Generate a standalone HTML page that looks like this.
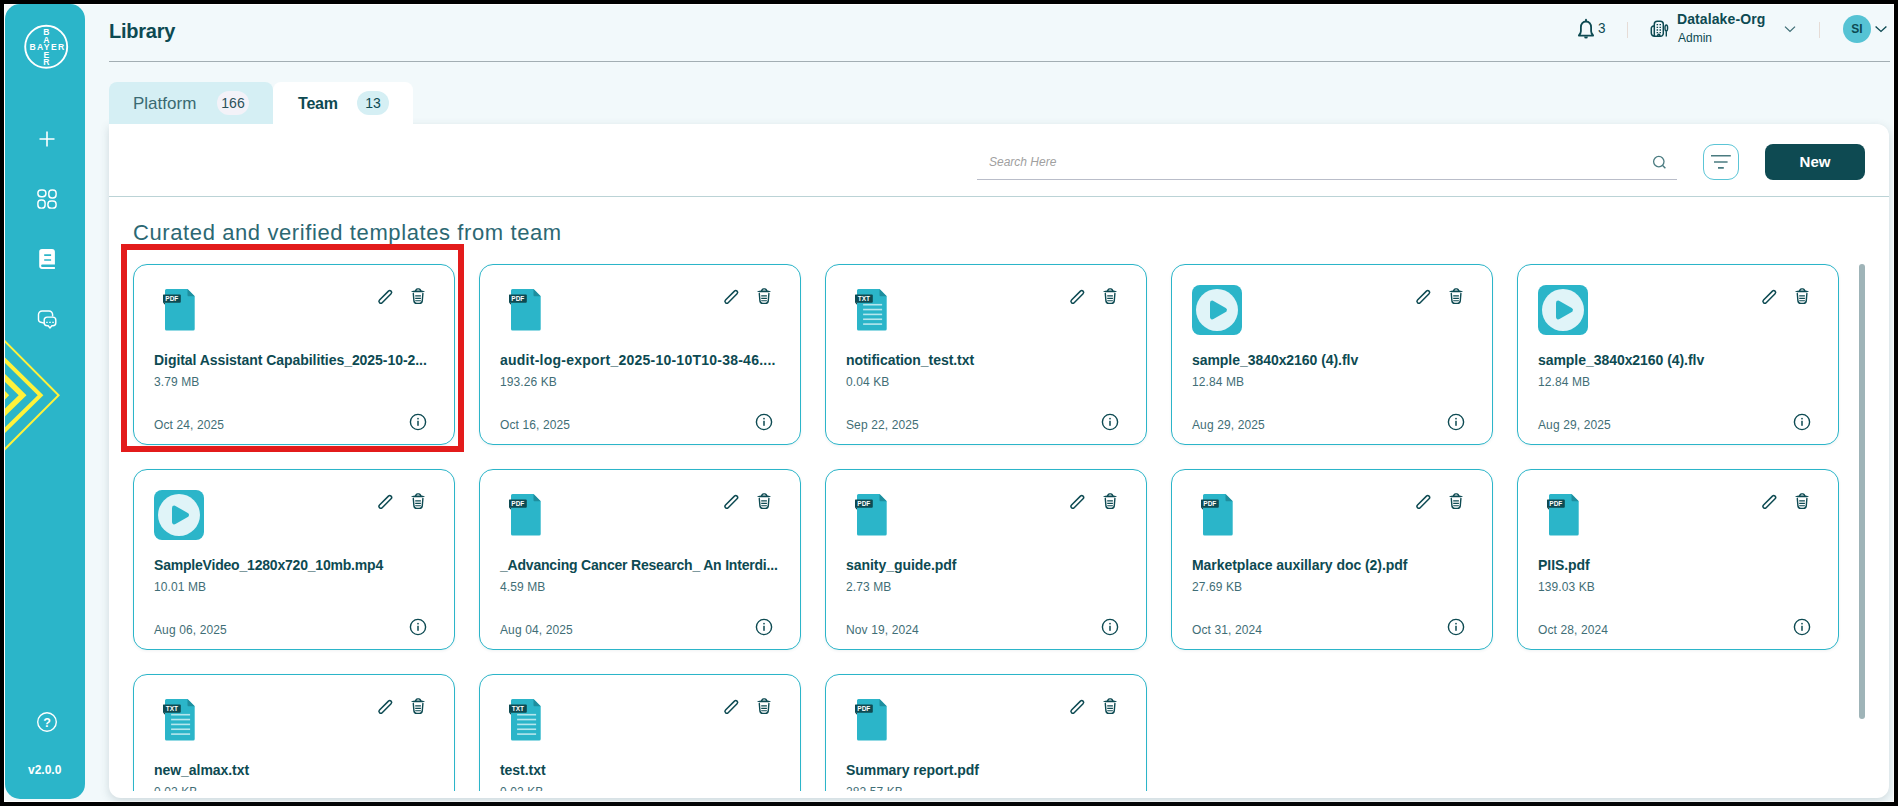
<!DOCTYPE html>
<html><head><meta charset="utf-8">
<style>
*{box-sizing:border-box;margin:0;padding:0}
html,body{width:1898px;height:806px;overflow:hidden;background:#000;font-family:"Liberation Sans",sans-serif}
.abs{position:absolute}
#frame{position:absolute;left:4px;top:4px;width:1890px;height:798px;background:#F2F9FB;border:1px solid #fff}
#sidebar{position:absolute;left:5px;top:4px;width:80px;height:795px;background:#2BB5C9;border-radius:15px;overflow:hidden}
#sidebar svg{position:absolute;margin-top:1px}
.t{position:absolute;white-space:nowrap;line-height:1}
#panel{position:absolute;left:109px;top:124px;width:1780px;height:674px;background:#fff;border-radius:0 12px 12px 12px;box-shadow:0 3px 10px rgba(60,90,100,0.20)}
#scroll{position:absolute;left:109px;top:197px;width:1780px;height:594px;overflow:hidden}
.card{position:absolute;width:322px;height:181px;border:1px solid #2BB5C9;border-radius:14px;background:#fff;box-shadow:0 1px 3px rgba(40,70,80,0.07)}
.card .nm{position:absolute;left:20px;top:87px;letter-spacing:-0.05px;font-size:14px;font-weight:bold;color:#0D4A52;white-space:nowrap;line-height:16px}
.card .sz{position:absolute;left:20px;top:110px;font-size:12px;letter-spacing:0.1px;color:#3F6E76;white-space:nowrap;line-height:14px}
.card .dt{position:absolute;left:20px;top:153px;font-size:12px;letter-spacing:0.12px;color:#3F6E76;white-space:nowrap;line-height:14px}
.card svg{position:absolute}
</style></head>
<body>
<div id="frame"></div>
<div id="sidebar">
 <svg style="left:17px;top:17px" width="48" height="48" viewBox="0 0 48 48">
  <circle cx="24.2" cy="24.8" r="21" fill="none" stroke="#fff" stroke-width="1.9"/>
  <g font-family="Liberation Sans" font-weight="bold" font-size="7.6" fill="#fff" text-anchor="middle">
   <text x="25.6" y="28.3" letter-spacing="1.4" font-size="8.6">BAYER</text>
   <text x="24.3" y="13.3" font-size="8.6">B</text><text x="24.3" y="20.9" font-size="8.6">A</text>
   <text x="24.3" y="35.9" font-size="8.6">E</text><text x="24.3" y="43.3" font-size="8.6">R</text>
  </g>
 </svg>
 <svg style="left:33px;top:125px" width="18" height="18" viewBox="0 0 18 18"><path d="M9 1.5V16.5M1.5 9H16.5" stroke="#fff" stroke-width="1.6"/></svg>
 <svg style="left:31px;top:183px" width="22" height="22" viewBox="0 0 22 22" fill="none" stroke="#fff" stroke-width="1.45">
  <rect x="1.9" y="1.9" width="8" height="6.9" rx="3.2"/><rect x="12.8" y="1.9" width="7.3" height="8" rx="3.2"/>
  <rect x="1.9" y="11.9" width="7.2" height="8.2" rx="3.2"/><rect x="11.9" y="13" width="8.2" height="7.1" rx="3.2"/>
 </svg>
 <svg style="left:33px;top:243px" width="18" height="22" viewBox="0 0 18 22">
  <path d="M4 0.9 H14 A2.9 2.9 0 0 1 16.9 3.8 V16.5 H4.3 A1.2 1.2 0 0 0 4.3 18.9 H16.9 V20.9 H4 A2.8 2.8 0 0 1 1.2 18.1 V3.7 A2.8 2.8 0 0 1 4 0.9Z" fill="#fff"/>
  <path d="M6.2 7.1 H13.1 M6.2 12 H13.1" stroke="#2BB5C9" stroke-width="1.6"/>
 </svg>
 <svg style="left:31px;top:303px" width="22" height="22" viewBox="0 0 22 22" fill="none" stroke="#fff" stroke-width="1.45">
  <path d="M16.6 8.6 V6.6 A3.6 3.6 0 0 0 13 3 H6.1 A3.6 3.6 0 0 0 2.5 6.6 V11.4 A3 3 0 0 0 4.8 14.3 L8.2 15.1"/>
  <path d="M11.2 9.1 H16.8 A3 3 0 0 1 19.8 12.1 V14.8 A3 3 0 0 1 16.8 17.8 H15.9 L14 19.9 L12.1 17.8 H11.2 A3 3 0 0 1 8.2 14.8 V12.1 A3 3 0 0 1 11.2 9.1Z"/>
  <path d="M10.2 14.3 h1.5 M13.25 14.3 h1.5 M16.3 14.3 h1.5" stroke-width="1.3"/>
 </svg>
 <svg style="left:0;top:325px" width="80" height="130" viewBox="0 330 80 130">
  <g fill="#FFF23A">
   <path d="M0 340 L55 395.2 L0 450.4 V447.6 L52.2 395.2 L0 342.8Z"/>
   <path d="M0 357.4 L38.4 395.2 L0 433 V427.3 L32.7 395.2 L0 363.1Z"/>
   <path d="M0 374.1 L21.5 395.2 L0 416.3 V408.5 L13.7 395.2 L0 381.9Z"/>
   <path d="M0 390.9 L4.2 395.2 L0 399.5Z"/>
  </g>
 </svg>
 <svg style="left:31px;top:706px" width="22" height="22" viewBox="0 0 22 22">
  <circle cx="11" cy="11" r="9.3" fill="none" stroke="#fff" stroke-width="1.4"/>
  <text x="11" y="15.5" font-family="Liberation Sans" font-size="12.5" font-weight="bold" fill="#fff" text-anchor="middle">?</text>
 </svg>
 <div class="t" style="left:23px;top:760px;font-size:12px;font-weight:bold;color:#fff">v2.0.0</div>
</div>

<div class="t" style="left:109px;top:21px;font-size:20px;font-weight:bold;letter-spacing:-0.25px;color:#0D4A52">Library</div>
<div class="abs" style="left:109px;top:61px;width:1781px;height:1px;background:#A3AEB3"></div>

<!-- header right -->
<svg class="abs" style="left:1576px;top:17px" width="20" height="24" viewBox="0 0 20 24">
 <path d="M10 4.5 C6.9 4.5 4.9 6.9 4.9 10.3 V14.2 C4.9 16.1 3.9 17.2 3 18.2 Q2.6 18.7 3.3 18.7 H16.7 Q17.4 18.7 17 18.2 C16.1 17.2 15.1 16.1 15.1 14.2 V10.3 C15.1 6.9 13.1 4.5 10 4.5Z" fill="none" stroke="#0D4A52" stroke-width="1.8" stroke-linejoin="round"/>
 <path d="M10 2.6 v1.4" stroke="#0D4A52" stroke-width="1.9" stroke-linecap="round"/>
 <path d="M8.1 19.4 a1.9 2.2 0 0 0 3.8 0Z" fill="#0D4A52"/>
</svg>
<div class="t" style="left:1598px;top:20px;font-size:15px;color:#0D4A52;transform:scaleX(0.9);transform-origin:left">3</div>
<div class="abs" style="left:1627px;top:22px;width:1px;height:16px;background:#E6DCD6"></div>
<svg class="abs" style="left:1647px;top:19px" width="24" height="20" viewBox="0 0 24 20" fill="none" stroke="#0D4A52" stroke-width="1.5">
 <path d="M7.3 17.3 V5.2 A3 3 0 0 1 10.3 2.2 H13.3 A3 3 0 0 1 16.3 5.2 V14.5 A2.8 2.8 0 0 1 13.5 17.3 H7.5 A3.2 3.2 0 0 1 4.3 14.1 V9.3 A2.2 2.2 0 0 1 6.6 7.1"/>
 <path d="M9.6 5.6h1.5M12.5 5.6h1.5M9.6 8.3h1.5M12.5 8.3h1.5M9.6 11h1.5M12.5 11h1.5M9.6 13.7h1.5M12.5 13.7h1.5" stroke-width="1.3"/>
 <path d="M10.8 17.3 v-1 a1 1 0 0 1 2 0 V17.3"/>
 <path d="M19.3 17.6 V12 M19.3 12 a1.3 3 0 0 0 0 -6 a1.3 3 0 0 0 0 6" stroke-width="1.4"/>
</svg>
<div class="t" style="left:1677px;top:12px;font-size:14px;font-weight:bold;letter-spacing:0.1px;color:#0D4A52">Datalake-Org</div>
<div class="t" style="left:1678px;top:32px;font-size:12px;color:#0D4A52">Admin</div>
<svg class="abs" style="left:1783px;top:24px" width="14" height="10" viewBox="0 0 14 10"><path d="M2 2.6 L7 7.4 L12 2.6" fill="none" stroke="#3F6E76" stroke-width="1.3"/></svg>
<div class="abs" style="left:1819px;top:22px;width:1px;height:16px;background:#E6DCD6"></div>
<div class="abs" style="left:1843px;top:15px;width:28px;height:28px;border-radius:50%;background:#56C3D4"></div>
<div class="t" style="left:1843px;top:23px;width:28px;text-align:center;font-size:12px;font-weight:bold;color:#0D4A52">SI</div>
<svg class="abs" style="left:1873px;top:23px" width="16" height="12" viewBox="0 0 16 12"><path d="M2.6 3.6 L8 8.4 L13.4 3.6" fill="none" stroke="#0D4A52" stroke-width="1.4"/></svg>

<!-- tabs -->
<div id="panel"></div>
<div class="abs" style="left:109px;top:82px;width:164px;height:42px;background:#D5EFF4;border-radius:8px 8px 0 0"></div>
<div class="t" style="left:133px;top:95px;font-size:17px;color:#3A6A72">Platform</div>
<div class="abs" style="left:217px;top:91px;width:32px;height:24px;border-radius:12px;background:#F3F2F8"></div>
<div class="t" style="left:217px;top:96px;width:32px;text-align:center;font-size:14px;color:#2B5159">166</div>

<div class="abs" style="left:273px;top:82px;width:140px;height:50px;background:#fff;border-radius:8px 8px 0 0"></div>
<div class="t" style="left:298px;top:96px;font-size:16px;letter-spacing:-0.2px;font-weight:bold;color:#0D4A52">Team</div>
<div class="abs" style="left:357px;top:91px;width:32px;height:24px;border-radius:12px;background:#D5EFF4"></div>
<div class="t" style="left:357px;top:96px;width:32px;text-align:center;font-size:14px;color:#0D4A52">13</div>

<!-- toolbar -->
<div class="t" style="left:989px;top:156px;font-size:12px;font-style:italic;color:#A0A0A0">Search Here</div>
<div class="abs" style="left:977px;top:179px;width:700px;height:1px;background:#B9BDC9"></div>
<svg class="abs" style="left:1650px;top:153px" width="18" height="18" viewBox="0 0 18 18"><circle cx="8.8" cy="8.6" r="5.2" fill="none" stroke="#4A7B80" stroke-width="1.3"/><path d="M12.6 12.4 L15.4 15.2" stroke="#4A7B80" stroke-width="1.4"/></svg>
<div class="abs" style="left:1703px;top:144px;width:36px;height:36px;border:1px solid #5BC5D6;border-radius:11px"></div>
<svg class="abs" style="left:1703px;top:144px" width="36" height="36" viewBox="0 0 36 36"><path d="M8 11.8 H27.8 M11 18 H24.6 M15 23.9 H20.8" stroke="#4A7B80" stroke-width="1.6"/></svg>
<div class="abs" style="left:1765px;top:144px;width:100px;height:36px;border-radius:8px;background:#0E4A52"></div>
<div class="t" style="left:1765px;top:154px;width:100px;text-align:center;font-size:15px;font-weight:bold;color:#fff">New</div>
<div class="abs" style="left:109px;top:196px;width:1780px;height:1px;background:#BBD3D6"></div>

<div class="t" style="left:133px;top:222px;font-size:22px;color:#2C6873;letter-spacing:0.6px">Curated and verified templates from team</div>

<div class="abs" style="left:0;top:0;width:1898px;height:791px;overflow:hidden">
<div class="card" style="left:133px;top:264px"><svg style="left:29.3px;top:24px" width="34" height="44" viewBox="-2 0 34 44">
<path d="M1.5 0 H22.5 L29.7 7.2 V40 a1.5 1.5 0 0 1 -1.5 1.5 H1.5 A1.5 1.5 0 0 1 0 40 V1.5 A1.5 1.5 0 0 1 1.5 0Z" fill="#2BB5C9"/>
<path d="M22.5 0 L29.7 7.2 H23.5 a1 1 0 0 1 -1 -1Z" fill="#1E8E9E"/>

<path d="M-2 13.5 L0 15.8 V13.5Z" fill="#0A3A40"/>
<rect x="-2.2" y="5.5" width="18" height="8.2" rx="1" fill="#0E4A52"/>
<text x="6.8" y="12" font-family="Liberation Sans" font-size="6.5" font-weight="bold" fill="#fff" text-anchor="middle">PDF</text>
</svg><svg style="left:243px;top:20px" width="52" height="22" viewBox="0 0 52 22">
<path d="M5.16 17.66 L14.06 8.76 A1.85 1.85 0 0 0 11.44 6.14 L2.54 15.04 A1.85 1.85 0 0 0 5.16 17.66Z" fill="none" stroke="#0D4A52" stroke-width="1.5" stroke-linejoin="round"/>
<path d="M33.9 6.45 Q36.2 5.6 39 5.55 H43.2 Q46 5.6 48.1 6.45 Q46 7.3 43.2 7.3 H39 Q36.2 7.3 33.9 6.45Z" fill="#0D4A52"/>
<path d="M38.3 6.2 L39.4 4.5 Q39.8 3.9 40.5 3.9 H41.9 Q42.6 3.9 43 4.5 L44.1 6.2" fill="none" stroke="#0D4A52" stroke-width="1.4" stroke-linejoin="round"/>
<path d="M36.3 8.5 L36.9 15.6 Q37.1 18.4 39.7 18.4 H42.5 Q45.1 18.4 45.3 15.6 L45.9 8.5" fill="none" stroke="#0D4A52" stroke-width="1.4" stroke-linecap="round"/>
<path d="M38.2 10.9 H43.9 M38.2 13.4 H43.9 M38.2 15.7 H43.9" stroke="#0D4A52" stroke-width="1.15"/>
</svg><div class="nm">Digital Assistant Capabilities_2025-10-2...</div><div class="sz">3.79 MB</div><div class="dt">Oct 24, 2025</div><svg style="left:275px;top:148px" width="18" height="18" viewBox="0 0 18 18">
<circle cx="9" cy="9" r="7.6" fill="none" stroke="#0D4A52" stroke-width="1.4"/>
<rect x="8.25" y="4.9" width="1.5" height="1.5" fill="#0D4A52"/>
<rect x="8.25" y="7.8" width="1.5" height="5" fill="#0D4A52"/>
</svg></div><div class="card" style="left:479px;top:264px"><svg style="left:29.3px;top:24px" width="34" height="44" viewBox="-2 0 34 44">
<path d="M1.5 0 H22.5 L29.7 7.2 V40 a1.5 1.5 0 0 1 -1.5 1.5 H1.5 A1.5 1.5 0 0 1 0 40 V1.5 A1.5 1.5 0 0 1 1.5 0Z" fill="#2BB5C9"/>
<path d="M22.5 0 L29.7 7.2 H23.5 a1 1 0 0 1 -1 -1Z" fill="#1E8E9E"/>

<path d="M-2 13.5 L0 15.8 V13.5Z" fill="#0A3A40"/>
<rect x="-2.2" y="5.5" width="18" height="8.2" rx="1" fill="#0E4A52"/>
<text x="6.8" y="12" font-family="Liberation Sans" font-size="6.5" font-weight="bold" fill="#fff" text-anchor="middle">PDF</text>
</svg><svg style="left:243px;top:20px" width="52" height="22" viewBox="0 0 52 22">
<path d="M5.16 17.66 L14.06 8.76 A1.85 1.85 0 0 0 11.44 6.14 L2.54 15.04 A1.85 1.85 0 0 0 5.16 17.66Z" fill="none" stroke="#0D4A52" stroke-width="1.5" stroke-linejoin="round"/>
<path d="M33.9 6.45 Q36.2 5.6 39 5.55 H43.2 Q46 5.6 48.1 6.45 Q46 7.3 43.2 7.3 H39 Q36.2 7.3 33.9 6.45Z" fill="#0D4A52"/>
<path d="M38.3 6.2 L39.4 4.5 Q39.8 3.9 40.5 3.9 H41.9 Q42.6 3.9 43 4.5 L44.1 6.2" fill="none" stroke="#0D4A52" stroke-width="1.4" stroke-linejoin="round"/>
<path d="M36.3 8.5 L36.9 15.6 Q37.1 18.4 39.7 18.4 H42.5 Q45.1 18.4 45.3 15.6 L45.9 8.5" fill="none" stroke="#0D4A52" stroke-width="1.4" stroke-linecap="round"/>
<path d="M38.2 10.9 H43.9 M38.2 13.4 H43.9 M38.2 15.7 H43.9" stroke="#0D4A52" stroke-width="1.15"/>
</svg><div class="nm" style="letter-spacing:0.24px">audit-log-export_2025-10-10T10-38-46....</div><div class="sz">193.26 KB</div><div class="dt">Oct 16, 2025</div><svg style="left:275px;top:148px" width="18" height="18" viewBox="0 0 18 18">
<circle cx="9" cy="9" r="7.6" fill="none" stroke="#0D4A52" stroke-width="1.4"/>
<rect x="8.25" y="4.9" width="1.5" height="1.5" fill="#0D4A52"/>
<rect x="8.25" y="7.8" width="1.5" height="5" fill="#0D4A52"/>
</svg></div><div class="card" style="left:825px;top:264px"><svg style="left:29.3px;top:24px" width="34" height="44" viewBox="-2 0 34 44">
<path d="M1.5 0 H22.5 L29.7 7.2 V40 a1.5 1.5 0 0 1 -1.5 1.5 H1.5 A1.5 1.5 0 0 1 0 40 V1.5 A1.5 1.5 0 0 1 1.5 0Z" fill="#2BB5C9"/>
<path d="M22.5 0 L29.7 7.2 H23.5 a1 1 0 0 1 -1 -1Z" fill="#1E8E9E"/>
<rect x="6.1" y="14.90" width="19" height="1.6" fill="#B5E6ED"/><rect x="6.1" y="19.75" width="19" height="1.6" fill="#B5E6ED"/><rect x="6.1" y="24.60" width="19" height="1.6" fill="#B5E6ED"/><rect x="6.1" y="29.45" width="19" height="1.6" fill="#B5E6ED"/><rect x="6.1" y="34.30" width="19" height="1.6" fill="#B5E6ED"/>
<path d="M-2 13.5 L0 15.8 V13.5Z" fill="#0A3A40"/>
<rect x="-2.2" y="5.5" width="18" height="8.2" rx="1" fill="#0E4A52"/>
<text x="6.8" y="12" font-family="Liberation Sans" font-size="6.5" font-weight="bold" fill="#fff" text-anchor="middle">TXT</text>
</svg><svg style="left:243px;top:20px" width="52" height="22" viewBox="0 0 52 22">
<path d="M5.16 17.66 L14.06 8.76 A1.85 1.85 0 0 0 11.44 6.14 L2.54 15.04 A1.85 1.85 0 0 0 5.16 17.66Z" fill="none" stroke="#0D4A52" stroke-width="1.5" stroke-linejoin="round"/>
<path d="M33.9 6.45 Q36.2 5.6 39 5.55 H43.2 Q46 5.6 48.1 6.45 Q46 7.3 43.2 7.3 H39 Q36.2 7.3 33.9 6.45Z" fill="#0D4A52"/>
<path d="M38.3 6.2 L39.4 4.5 Q39.8 3.9 40.5 3.9 H41.9 Q42.6 3.9 43 4.5 L44.1 6.2" fill="none" stroke="#0D4A52" stroke-width="1.4" stroke-linejoin="round"/>
<path d="M36.3 8.5 L36.9 15.6 Q37.1 18.4 39.7 18.4 H42.5 Q45.1 18.4 45.3 15.6 L45.9 8.5" fill="none" stroke="#0D4A52" stroke-width="1.4" stroke-linecap="round"/>
<path d="M38.2 10.9 H43.9 M38.2 13.4 H43.9 M38.2 15.7 H43.9" stroke="#0D4A52" stroke-width="1.15"/>
</svg><div class="nm">notification_test.txt</div><div class="sz">0.04 KB</div><div class="dt">Sep 22, 2025</div><svg style="left:275px;top:148px" width="18" height="18" viewBox="0 0 18 18">
<circle cx="9" cy="9" r="7.6" fill="none" stroke="#0D4A52" stroke-width="1.4"/>
<rect x="8.25" y="4.9" width="1.5" height="1.5" fill="#0D4A52"/>
<rect x="8.25" y="7.8" width="1.5" height="5" fill="#0D4A52"/>
</svg></div><div class="card" style="left:1171px;top:264px"><svg style="left:20px;top:20px" width="50" height="50" viewBox="0 0 50 50">
<rect width="50" height="50" rx="8" fill="#2BB5C9"/>
<circle cx="25" cy="25" r="21" fill="#E0F4F8"/>
<path d="M20.3 17.9 L32.6 25 L20.3 32.1Z" fill="#2BB5C9" stroke="#2BB5C9" stroke-width="4.6" stroke-linejoin="round"/>
</svg><svg style="left:243px;top:20px" width="52" height="22" viewBox="0 0 52 22">
<path d="M5.16 17.66 L14.06 8.76 A1.85 1.85 0 0 0 11.44 6.14 L2.54 15.04 A1.85 1.85 0 0 0 5.16 17.66Z" fill="none" stroke="#0D4A52" stroke-width="1.5" stroke-linejoin="round"/>
<path d="M33.9 6.45 Q36.2 5.6 39 5.55 H43.2 Q46 5.6 48.1 6.45 Q46 7.3 43.2 7.3 H39 Q36.2 7.3 33.9 6.45Z" fill="#0D4A52"/>
<path d="M38.3 6.2 L39.4 4.5 Q39.8 3.9 40.5 3.9 H41.9 Q42.6 3.9 43 4.5 L44.1 6.2" fill="none" stroke="#0D4A52" stroke-width="1.4" stroke-linejoin="round"/>
<path d="M36.3 8.5 L36.9 15.6 Q37.1 18.4 39.7 18.4 H42.5 Q45.1 18.4 45.3 15.6 L45.9 8.5" fill="none" stroke="#0D4A52" stroke-width="1.4" stroke-linecap="round"/>
<path d="M38.2 10.9 H43.9 M38.2 13.4 H43.9 M38.2 15.7 H43.9" stroke="#0D4A52" stroke-width="1.15"/>
</svg><div class="nm">sample_3840x2160 (4).flv</div><div class="sz">12.84 MB</div><div class="dt">Aug 29, 2025</div><svg style="left:275px;top:148px" width="18" height="18" viewBox="0 0 18 18">
<circle cx="9" cy="9" r="7.6" fill="none" stroke="#0D4A52" stroke-width="1.4"/>
<rect x="8.25" y="4.9" width="1.5" height="1.5" fill="#0D4A52"/>
<rect x="8.25" y="7.8" width="1.5" height="5" fill="#0D4A52"/>
</svg></div><div class="card" style="left:1517px;top:264px"><svg style="left:20px;top:20px" width="50" height="50" viewBox="0 0 50 50">
<rect width="50" height="50" rx="8" fill="#2BB5C9"/>
<circle cx="25" cy="25" r="21" fill="#E0F4F8"/>
<path d="M20.3 17.9 L32.6 25 L20.3 32.1Z" fill="#2BB5C9" stroke="#2BB5C9" stroke-width="4.6" stroke-linejoin="round"/>
</svg><svg style="left:243px;top:20px" width="52" height="22" viewBox="0 0 52 22">
<path d="M5.16 17.66 L14.06 8.76 A1.85 1.85 0 0 0 11.44 6.14 L2.54 15.04 A1.85 1.85 0 0 0 5.16 17.66Z" fill="none" stroke="#0D4A52" stroke-width="1.5" stroke-linejoin="round"/>
<path d="M33.9 6.45 Q36.2 5.6 39 5.55 H43.2 Q46 5.6 48.1 6.45 Q46 7.3 43.2 7.3 H39 Q36.2 7.3 33.9 6.45Z" fill="#0D4A52"/>
<path d="M38.3 6.2 L39.4 4.5 Q39.8 3.9 40.5 3.9 H41.9 Q42.6 3.9 43 4.5 L44.1 6.2" fill="none" stroke="#0D4A52" stroke-width="1.4" stroke-linejoin="round"/>
<path d="M36.3 8.5 L36.9 15.6 Q37.1 18.4 39.7 18.4 H42.5 Q45.1 18.4 45.3 15.6 L45.9 8.5" fill="none" stroke="#0D4A52" stroke-width="1.4" stroke-linecap="round"/>
<path d="M38.2 10.9 H43.9 M38.2 13.4 H43.9 M38.2 15.7 H43.9" stroke="#0D4A52" stroke-width="1.15"/>
</svg><div class="nm">sample_3840x2160 (4).flv</div><div class="sz">12.84 MB</div><div class="dt">Aug 29, 2025</div><svg style="left:275px;top:148px" width="18" height="18" viewBox="0 0 18 18">
<circle cx="9" cy="9" r="7.6" fill="none" stroke="#0D4A52" stroke-width="1.4"/>
<rect x="8.25" y="4.9" width="1.5" height="1.5" fill="#0D4A52"/>
<rect x="8.25" y="7.8" width="1.5" height="5" fill="#0D4A52"/>
</svg></div><div class="card" style="left:133px;top:469px"><svg style="left:20px;top:20px" width="50" height="50" viewBox="0 0 50 50">
<rect width="50" height="50" rx="8" fill="#2BB5C9"/>
<circle cx="25" cy="25" r="21" fill="#E0F4F8"/>
<path d="M20.3 17.9 L32.6 25 L20.3 32.1Z" fill="#2BB5C9" stroke="#2BB5C9" stroke-width="4.6" stroke-linejoin="round"/>
</svg><svg style="left:243px;top:20px" width="52" height="22" viewBox="0 0 52 22">
<path d="M5.16 17.66 L14.06 8.76 A1.85 1.85 0 0 0 11.44 6.14 L2.54 15.04 A1.85 1.85 0 0 0 5.16 17.66Z" fill="none" stroke="#0D4A52" stroke-width="1.5" stroke-linejoin="round"/>
<path d="M33.9 6.45 Q36.2 5.6 39 5.55 H43.2 Q46 5.6 48.1 6.45 Q46 7.3 43.2 7.3 H39 Q36.2 7.3 33.9 6.45Z" fill="#0D4A52"/>
<path d="M38.3 6.2 L39.4 4.5 Q39.8 3.9 40.5 3.9 H41.9 Q42.6 3.9 43 4.5 L44.1 6.2" fill="none" stroke="#0D4A52" stroke-width="1.4" stroke-linejoin="round"/>
<path d="M36.3 8.5 L36.9 15.6 Q37.1 18.4 39.7 18.4 H42.5 Q45.1 18.4 45.3 15.6 L45.9 8.5" fill="none" stroke="#0D4A52" stroke-width="1.4" stroke-linecap="round"/>
<path d="M38.2 10.9 H43.9 M38.2 13.4 H43.9 M38.2 15.7 H43.9" stroke="#0D4A52" stroke-width="1.15"/>
</svg><div class="nm" style="letter-spacing:-0.2px">SampleVideo_1280x720_10mb.mp4</div><div class="sz">10.01 MB</div><div class="dt">Aug 06, 2025</div><svg style="left:275px;top:148px" width="18" height="18" viewBox="0 0 18 18">
<circle cx="9" cy="9" r="7.6" fill="none" stroke="#0D4A52" stroke-width="1.4"/>
<rect x="8.25" y="4.9" width="1.5" height="1.5" fill="#0D4A52"/>
<rect x="8.25" y="7.8" width="1.5" height="5" fill="#0D4A52"/>
</svg></div><div class="card" style="left:479px;top:469px"><svg style="left:29.3px;top:24px" width="34" height="44" viewBox="-2 0 34 44">
<path d="M1.5 0 H22.5 L29.7 7.2 V40 a1.5 1.5 0 0 1 -1.5 1.5 H1.5 A1.5 1.5 0 0 1 0 40 V1.5 A1.5 1.5 0 0 1 1.5 0Z" fill="#2BB5C9"/>
<path d="M22.5 0 L29.7 7.2 H23.5 a1 1 0 0 1 -1 -1Z" fill="#1E8E9E"/>

<path d="M-2 13.5 L0 15.8 V13.5Z" fill="#0A3A40"/>
<rect x="-2.2" y="5.5" width="18" height="8.2" rx="1" fill="#0E4A52"/>
<text x="6.8" y="12" font-family="Liberation Sans" font-size="6.5" font-weight="bold" fill="#fff" text-anchor="middle">PDF</text>
</svg><svg style="left:243px;top:20px" width="52" height="22" viewBox="0 0 52 22">
<path d="M5.16 17.66 L14.06 8.76 A1.85 1.85 0 0 0 11.44 6.14 L2.54 15.04 A1.85 1.85 0 0 0 5.16 17.66Z" fill="none" stroke="#0D4A52" stroke-width="1.5" stroke-linejoin="round"/>
<path d="M33.9 6.45 Q36.2 5.6 39 5.55 H43.2 Q46 5.6 48.1 6.45 Q46 7.3 43.2 7.3 H39 Q36.2 7.3 33.9 6.45Z" fill="#0D4A52"/>
<path d="M38.3 6.2 L39.4 4.5 Q39.8 3.9 40.5 3.9 H41.9 Q42.6 3.9 43 4.5 L44.1 6.2" fill="none" stroke="#0D4A52" stroke-width="1.4" stroke-linejoin="round"/>
<path d="M36.3 8.5 L36.9 15.6 Q37.1 18.4 39.7 18.4 H42.5 Q45.1 18.4 45.3 15.6 L45.9 8.5" fill="none" stroke="#0D4A52" stroke-width="1.4" stroke-linecap="round"/>
<path d="M38.2 10.9 H43.9 M38.2 13.4 H43.9 M38.2 15.7 H43.9" stroke="#0D4A52" stroke-width="1.15"/>
</svg><div class="nm" style="letter-spacing:-0.2px">_Advancing Cancer Research_ An Interdi...</div><div class="sz">4.59 MB</div><div class="dt">Aug 04, 2025</div><svg style="left:275px;top:148px" width="18" height="18" viewBox="0 0 18 18">
<circle cx="9" cy="9" r="7.6" fill="none" stroke="#0D4A52" stroke-width="1.4"/>
<rect x="8.25" y="4.9" width="1.5" height="1.5" fill="#0D4A52"/>
<rect x="8.25" y="7.8" width="1.5" height="5" fill="#0D4A52"/>
</svg></div><div class="card" style="left:825px;top:469px"><svg style="left:29.3px;top:24px" width="34" height="44" viewBox="-2 0 34 44">
<path d="M1.5 0 H22.5 L29.7 7.2 V40 a1.5 1.5 0 0 1 -1.5 1.5 H1.5 A1.5 1.5 0 0 1 0 40 V1.5 A1.5 1.5 0 0 1 1.5 0Z" fill="#2BB5C9"/>
<path d="M22.5 0 L29.7 7.2 H23.5 a1 1 0 0 1 -1 -1Z" fill="#1E8E9E"/>

<path d="M-2 13.5 L0 15.8 V13.5Z" fill="#0A3A40"/>
<rect x="-2.2" y="5.5" width="18" height="8.2" rx="1" fill="#0E4A52"/>
<text x="6.8" y="12" font-family="Liberation Sans" font-size="6.5" font-weight="bold" fill="#fff" text-anchor="middle">PDF</text>
</svg><svg style="left:243px;top:20px" width="52" height="22" viewBox="0 0 52 22">
<path d="M5.16 17.66 L14.06 8.76 A1.85 1.85 0 0 0 11.44 6.14 L2.54 15.04 A1.85 1.85 0 0 0 5.16 17.66Z" fill="none" stroke="#0D4A52" stroke-width="1.5" stroke-linejoin="round"/>
<path d="M33.9 6.45 Q36.2 5.6 39 5.55 H43.2 Q46 5.6 48.1 6.45 Q46 7.3 43.2 7.3 H39 Q36.2 7.3 33.9 6.45Z" fill="#0D4A52"/>
<path d="M38.3 6.2 L39.4 4.5 Q39.8 3.9 40.5 3.9 H41.9 Q42.6 3.9 43 4.5 L44.1 6.2" fill="none" stroke="#0D4A52" stroke-width="1.4" stroke-linejoin="round"/>
<path d="M36.3 8.5 L36.9 15.6 Q37.1 18.4 39.7 18.4 H42.5 Q45.1 18.4 45.3 15.6 L45.9 8.5" fill="none" stroke="#0D4A52" stroke-width="1.4" stroke-linecap="round"/>
<path d="M38.2 10.9 H43.9 M38.2 13.4 H43.9 M38.2 15.7 H43.9" stroke="#0D4A52" stroke-width="1.15"/>
</svg><div class="nm">sanity_guide.pdf</div><div class="sz">2.73 MB</div><div class="dt">Nov 19, 2024</div><svg style="left:275px;top:148px" width="18" height="18" viewBox="0 0 18 18">
<circle cx="9" cy="9" r="7.6" fill="none" stroke="#0D4A52" stroke-width="1.4"/>
<rect x="8.25" y="4.9" width="1.5" height="1.5" fill="#0D4A52"/>
<rect x="8.25" y="7.8" width="1.5" height="5" fill="#0D4A52"/>
</svg></div><div class="card" style="left:1171px;top:469px"><svg style="left:29.3px;top:24px" width="34" height="44" viewBox="-2 0 34 44">
<path d="M1.5 0 H22.5 L29.7 7.2 V40 a1.5 1.5 0 0 1 -1.5 1.5 H1.5 A1.5 1.5 0 0 1 0 40 V1.5 A1.5 1.5 0 0 1 1.5 0Z" fill="#2BB5C9"/>
<path d="M22.5 0 L29.7 7.2 H23.5 a1 1 0 0 1 -1 -1Z" fill="#1E8E9E"/>

<path d="M-2 13.5 L0 15.8 V13.5Z" fill="#0A3A40"/>
<rect x="-2.2" y="5.5" width="18" height="8.2" rx="1" fill="#0E4A52"/>
<text x="6.8" y="12" font-family="Liberation Sans" font-size="6.5" font-weight="bold" fill="#fff" text-anchor="middle">PDF</text>
</svg><svg style="left:243px;top:20px" width="52" height="22" viewBox="0 0 52 22">
<path d="M5.16 17.66 L14.06 8.76 A1.85 1.85 0 0 0 11.44 6.14 L2.54 15.04 A1.85 1.85 0 0 0 5.16 17.66Z" fill="none" stroke="#0D4A52" stroke-width="1.5" stroke-linejoin="round"/>
<path d="M33.9 6.45 Q36.2 5.6 39 5.55 H43.2 Q46 5.6 48.1 6.45 Q46 7.3 43.2 7.3 H39 Q36.2 7.3 33.9 6.45Z" fill="#0D4A52"/>
<path d="M38.3 6.2 L39.4 4.5 Q39.8 3.9 40.5 3.9 H41.9 Q42.6 3.9 43 4.5 L44.1 6.2" fill="none" stroke="#0D4A52" stroke-width="1.4" stroke-linejoin="round"/>
<path d="M36.3 8.5 L36.9 15.6 Q37.1 18.4 39.7 18.4 H42.5 Q45.1 18.4 45.3 15.6 L45.9 8.5" fill="none" stroke="#0D4A52" stroke-width="1.4" stroke-linecap="round"/>
<path d="M38.2 10.9 H43.9 M38.2 13.4 H43.9 M38.2 15.7 H43.9" stroke="#0D4A52" stroke-width="1.15"/>
</svg><div class="nm">Marketplace auxillary doc (2).pdf</div><div class="sz">27.69 KB</div><div class="dt">Oct 31, 2024</div><svg style="left:275px;top:148px" width="18" height="18" viewBox="0 0 18 18">
<circle cx="9" cy="9" r="7.6" fill="none" stroke="#0D4A52" stroke-width="1.4"/>
<rect x="8.25" y="4.9" width="1.5" height="1.5" fill="#0D4A52"/>
<rect x="8.25" y="7.8" width="1.5" height="5" fill="#0D4A52"/>
</svg></div><div class="card" style="left:1517px;top:469px"><svg style="left:29.3px;top:24px" width="34" height="44" viewBox="-2 0 34 44">
<path d="M1.5 0 H22.5 L29.7 7.2 V40 a1.5 1.5 0 0 1 -1.5 1.5 H1.5 A1.5 1.5 0 0 1 0 40 V1.5 A1.5 1.5 0 0 1 1.5 0Z" fill="#2BB5C9"/>
<path d="M22.5 0 L29.7 7.2 H23.5 a1 1 0 0 1 -1 -1Z" fill="#1E8E9E"/>

<path d="M-2 13.5 L0 15.8 V13.5Z" fill="#0A3A40"/>
<rect x="-2.2" y="5.5" width="18" height="8.2" rx="1" fill="#0E4A52"/>
<text x="6.8" y="12" font-family="Liberation Sans" font-size="6.5" font-weight="bold" fill="#fff" text-anchor="middle">PDF</text>
</svg><svg style="left:243px;top:20px" width="52" height="22" viewBox="0 0 52 22">
<path d="M5.16 17.66 L14.06 8.76 A1.85 1.85 0 0 0 11.44 6.14 L2.54 15.04 A1.85 1.85 0 0 0 5.16 17.66Z" fill="none" stroke="#0D4A52" stroke-width="1.5" stroke-linejoin="round"/>
<path d="M33.9 6.45 Q36.2 5.6 39 5.55 H43.2 Q46 5.6 48.1 6.45 Q46 7.3 43.2 7.3 H39 Q36.2 7.3 33.9 6.45Z" fill="#0D4A52"/>
<path d="M38.3 6.2 L39.4 4.5 Q39.8 3.9 40.5 3.9 H41.9 Q42.6 3.9 43 4.5 L44.1 6.2" fill="none" stroke="#0D4A52" stroke-width="1.4" stroke-linejoin="round"/>
<path d="M36.3 8.5 L36.9 15.6 Q37.1 18.4 39.7 18.4 H42.5 Q45.1 18.4 45.3 15.6 L45.9 8.5" fill="none" stroke="#0D4A52" stroke-width="1.4" stroke-linecap="round"/>
<path d="M38.2 10.9 H43.9 M38.2 13.4 H43.9 M38.2 15.7 H43.9" stroke="#0D4A52" stroke-width="1.15"/>
</svg><div class="nm">PIIS.pdf</div><div class="sz">139.03 KB</div><div class="dt">Oct 28, 2024</div><svg style="left:275px;top:148px" width="18" height="18" viewBox="0 0 18 18">
<circle cx="9" cy="9" r="7.6" fill="none" stroke="#0D4A52" stroke-width="1.4"/>
<rect x="8.25" y="4.9" width="1.5" height="1.5" fill="#0D4A52"/>
<rect x="8.25" y="7.8" width="1.5" height="5" fill="#0D4A52"/>
</svg></div><div class="card" style="left:133px;top:674px"><svg style="left:29.3px;top:24px" width="34" height="44" viewBox="-2 0 34 44">
<path d="M1.5 0 H22.5 L29.7 7.2 V40 a1.5 1.5 0 0 1 -1.5 1.5 H1.5 A1.5 1.5 0 0 1 0 40 V1.5 A1.5 1.5 0 0 1 1.5 0Z" fill="#2BB5C9"/>
<path d="M22.5 0 L29.7 7.2 H23.5 a1 1 0 0 1 -1 -1Z" fill="#1E8E9E"/>
<rect x="6.1" y="14.90" width="19" height="1.6" fill="#B5E6ED"/><rect x="6.1" y="19.75" width="19" height="1.6" fill="#B5E6ED"/><rect x="6.1" y="24.60" width="19" height="1.6" fill="#B5E6ED"/><rect x="6.1" y="29.45" width="19" height="1.6" fill="#B5E6ED"/><rect x="6.1" y="34.30" width="19" height="1.6" fill="#B5E6ED"/>
<path d="M-2 13.5 L0 15.8 V13.5Z" fill="#0A3A40"/>
<rect x="-2.2" y="5.5" width="18" height="8.2" rx="1" fill="#0E4A52"/>
<text x="6.8" y="12" font-family="Liberation Sans" font-size="6.5" font-weight="bold" fill="#fff" text-anchor="middle">TXT</text>
</svg><svg style="left:243px;top:20px" width="52" height="22" viewBox="0 0 52 22">
<path d="M5.16 17.66 L14.06 8.76 A1.85 1.85 0 0 0 11.44 6.14 L2.54 15.04 A1.85 1.85 0 0 0 5.16 17.66Z" fill="none" stroke="#0D4A52" stroke-width="1.5" stroke-linejoin="round"/>
<path d="M33.9 6.45 Q36.2 5.6 39 5.55 H43.2 Q46 5.6 48.1 6.45 Q46 7.3 43.2 7.3 H39 Q36.2 7.3 33.9 6.45Z" fill="#0D4A52"/>
<path d="M38.3 6.2 L39.4 4.5 Q39.8 3.9 40.5 3.9 H41.9 Q42.6 3.9 43 4.5 L44.1 6.2" fill="none" stroke="#0D4A52" stroke-width="1.4" stroke-linejoin="round"/>
<path d="M36.3 8.5 L36.9 15.6 Q37.1 18.4 39.7 18.4 H42.5 Q45.1 18.4 45.3 15.6 L45.9 8.5" fill="none" stroke="#0D4A52" stroke-width="1.4" stroke-linecap="round"/>
<path d="M38.2 10.9 H43.9 M38.2 13.4 H43.9 M38.2 15.7 H43.9" stroke="#0D4A52" stroke-width="1.15"/>
</svg><div class="nm">new_almax.txt</div><div class="sz">0.02 KB</div></div><div class="card" style="left:479px;top:674px"><svg style="left:29.3px;top:24px" width="34" height="44" viewBox="-2 0 34 44">
<path d="M1.5 0 H22.5 L29.7 7.2 V40 a1.5 1.5 0 0 1 -1.5 1.5 H1.5 A1.5 1.5 0 0 1 0 40 V1.5 A1.5 1.5 0 0 1 1.5 0Z" fill="#2BB5C9"/>
<path d="M22.5 0 L29.7 7.2 H23.5 a1 1 0 0 1 -1 -1Z" fill="#1E8E9E"/>
<rect x="6.1" y="14.90" width="19" height="1.6" fill="#B5E6ED"/><rect x="6.1" y="19.75" width="19" height="1.6" fill="#B5E6ED"/><rect x="6.1" y="24.60" width="19" height="1.6" fill="#B5E6ED"/><rect x="6.1" y="29.45" width="19" height="1.6" fill="#B5E6ED"/><rect x="6.1" y="34.30" width="19" height="1.6" fill="#B5E6ED"/>
<path d="M-2 13.5 L0 15.8 V13.5Z" fill="#0A3A40"/>
<rect x="-2.2" y="5.5" width="18" height="8.2" rx="1" fill="#0E4A52"/>
<text x="6.8" y="12" font-family="Liberation Sans" font-size="6.5" font-weight="bold" fill="#fff" text-anchor="middle">TXT</text>
</svg><svg style="left:243px;top:20px" width="52" height="22" viewBox="0 0 52 22">
<path d="M5.16 17.66 L14.06 8.76 A1.85 1.85 0 0 0 11.44 6.14 L2.54 15.04 A1.85 1.85 0 0 0 5.16 17.66Z" fill="none" stroke="#0D4A52" stroke-width="1.5" stroke-linejoin="round"/>
<path d="M33.9 6.45 Q36.2 5.6 39 5.55 H43.2 Q46 5.6 48.1 6.45 Q46 7.3 43.2 7.3 H39 Q36.2 7.3 33.9 6.45Z" fill="#0D4A52"/>
<path d="M38.3 6.2 L39.4 4.5 Q39.8 3.9 40.5 3.9 H41.9 Q42.6 3.9 43 4.5 L44.1 6.2" fill="none" stroke="#0D4A52" stroke-width="1.4" stroke-linejoin="round"/>
<path d="M36.3 8.5 L36.9 15.6 Q37.1 18.4 39.7 18.4 H42.5 Q45.1 18.4 45.3 15.6 L45.9 8.5" fill="none" stroke="#0D4A52" stroke-width="1.4" stroke-linecap="round"/>
<path d="M38.2 10.9 H43.9 M38.2 13.4 H43.9 M38.2 15.7 H43.9" stroke="#0D4A52" stroke-width="1.15"/>
</svg><div class="nm">test.txt</div><div class="sz">0.02 KB</div></div><div class="card" style="left:825px;top:674px"><svg style="left:29.3px;top:24px" width="34" height="44" viewBox="-2 0 34 44">
<path d="M1.5 0 H22.5 L29.7 7.2 V40 a1.5 1.5 0 0 1 -1.5 1.5 H1.5 A1.5 1.5 0 0 1 0 40 V1.5 A1.5 1.5 0 0 1 1.5 0Z" fill="#2BB5C9"/>
<path d="M22.5 0 L29.7 7.2 H23.5 a1 1 0 0 1 -1 -1Z" fill="#1E8E9E"/>

<path d="M-2 13.5 L0 15.8 V13.5Z" fill="#0A3A40"/>
<rect x="-2.2" y="5.5" width="18" height="8.2" rx="1" fill="#0E4A52"/>
<text x="6.8" y="12" font-family="Liberation Sans" font-size="6.5" font-weight="bold" fill="#fff" text-anchor="middle">PDF</text>
</svg><svg style="left:243px;top:20px" width="52" height="22" viewBox="0 0 52 22">
<path d="M5.16 17.66 L14.06 8.76 A1.85 1.85 0 0 0 11.44 6.14 L2.54 15.04 A1.85 1.85 0 0 0 5.16 17.66Z" fill="none" stroke="#0D4A52" stroke-width="1.5" stroke-linejoin="round"/>
<path d="M33.9 6.45 Q36.2 5.6 39 5.55 H43.2 Q46 5.6 48.1 6.45 Q46 7.3 43.2 7.3 H39 Q36.2 7.3 33.9 6.45Z" fill="#0D4A52"/>
<path d="M38.3 6.2 L39.4 4.5 Q39.8 3.9 40.5 3.9 H41.9 Q42.6 3.9 43 4.5 L44.1 6.2" fill="none" stroke="#0D4A52" stroke-width="1.4" stroke-linejoin="round"/>
<path d="M36.3 8.5 L36.9 15.6 Q37.1 18.4 39.7 18.4 H42.5 Q45.1 18.4 45.3 15.6 L45.9 8.5" fill="none" stroke="#0D4A52" stroke-width="1.4" stroke-linecap="round"/>
<path d="M38.2 10.9 H43.9 M38.2 13.4 H43.9 M38.2 15.7 H43.9" stroke="#0D4A52" stroke-width="1.15"/>
</svg><div class="nm">Summary report.pdf</div><div class="sz">282.57 KB</div></div>
</div>
<div class="abs" style="left:1859px;top:264px;width:6px;height:455px;border-radius:3px;background:#9FB4B8"></div>

<div class="abs" style="left:121px;top:244px;width:343px;height:208px;border:6px solid #E31B1B"></div>
</body></html>
